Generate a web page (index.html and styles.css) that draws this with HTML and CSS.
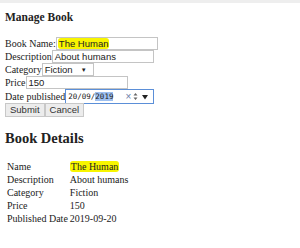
FILE: index.html
```html
<!DOCTYPE html>
<html lang="en">

<head>
    <meta charset="UTF-8">
    <title>Manage Book</title>
    <link rel="stylesheet" href="styles.css">
</head>

<body>
    <div class="topbar"></div>
    <div class="page">
        <h3>Manage Book</h3>
        <form class="book-form">
            <div class="row">Book Name:<span class="field wide name-field"><span class="mark">The Human</span></span></div>
            <div class="row">Description<span class="field wide">About humans</span></div>
            <div class="row">Category<span class="field select">Fiction<span class="arrow">&#9660;</span></span></div>
            <div class="row">Price<span class="field wide">150</span></div>
            <div class="row date-row">Date published<span class="field date">
                <span class="mono">20/09/<span class="sel">2019</span></span>
                <span class="ctrl clear">&#215;</span>
                <svg class="spin" width="5" height="9" viewBox="0 0 5 9"><path d="M0.5 3.5 L2.5 1 L4.5 3.5 Z M0.5 5.5 L2.5 8 L4.5 5.5 Z" fill="#666"/></svg>
                <svg class="drop" width="6" height="6" viewBox="0 0 6 6"><path d="M0 1 L6 1 L3 5.5 Z" fill="#222"/></svg>
            </span></div>
            <div class="buttons">
                <button type="button">Submit</button><button type="button">Cancel</button>
            </div>
        </form>

        <h2>Book Details</h2>
        <table class="details">
            <tr><td>Name</td><td><span class="mark">The Human</span></td></tr>
            <tr><td>Description</td><td>About humans</td></tr>
            <tr><td>Category</td><td>Fiction</td></tr>
            <tr><td>Price</td><td>150</td></tr>
            <tr><td>Published Date</td><td>2019-09-20</td></tr>
        </table>
    </div>
</body>

</html>
```

FILE: styles.css
```css
body {
    margin: 0;
    background: #fff;
    font-family: 'Liberation Serif', 'Times New Roman', serif;
    font-size: 10px;
    color: #222;
}

.topbar {
    height: 3px;
    background: #eeeeee;
}

.page {
    padding: 0 5px;
}

h3 {
    font-size: 11.5px;
    margin: 8px 0 13px;
    line-height: 13px;
}

.row {
    display: flex;
    align-items: center;
    height: 13px;
    white-space: nowrap;
}

.date-row {
    height: 15px;
}

.field {
    display: inline-flex;
    align-items: center;
    flex: none;
    min-width: 0;
    overflow: hidden;
    box-sizing: border-box;
    height: 13px;
    border: 1px solid #c4c4c4;
    padding: 0 2px;
    font-family: 'Liberation Sans', Arial, sans-serif;
    font-size: 9.5px;
    color: #222;
    background: #fff;
}

.wide {
    width: 102px;
}

.name-field {
    padding-left: 1px;
}

.mark {
    background: #f8f500;
    border-radius: 3px;
    padding: 0 1px;
}

.select {
    width: 52px;
    justify-content: space-between;
}

.arrow {
    font-size: 6px;
    margin-right: 4px;
}

.date {
    height: 15px;
    width: 89px;
    border: 1px solid #5b8fd8;
}

.mono {
    font-family: 'DejaVu Sans Mono', monospace;
    font-size: 7.5px;
}

.sel {
    background: #9ec0f0;
}

.clear {
    margin-left: 12px;
    font-size: 10px;
    color: #6b7ea8;
}

.spin {
    margin-left: 2px;
}

.drop {
    margin-left: 4px;
}

.buttons {
    display: flex;
    margin-top: -1px;
}

button {
    height: 14px;
    padding: 0 4px;
    border: 1px solid #c8c8c8;
    background: #ececec;
    font-family: 'Liberation Sans', Arial, sans-serif;
    font-size: 9.5px;
    color: #333;
    line-height: 12px;
}

h2 {
    font-size: 14.5px;
    line-height: 17px;
    margin: 13px 0 13px;
}

.details {
    border-collapse: collapse;
    margin-left: 1px;
}

.details td {
    padding: 0 1px;
    height: 13px;
    line-height: 13px;
    white-space: nowrap;
}
```
